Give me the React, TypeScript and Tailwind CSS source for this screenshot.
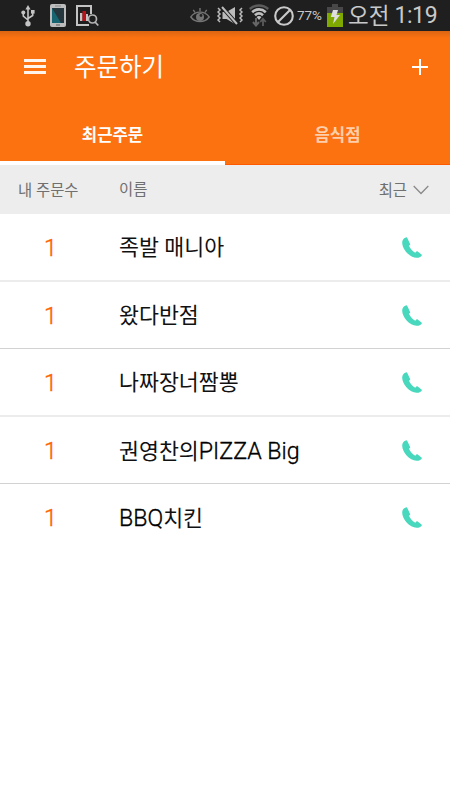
import clsx from "clsx";

interface Order {
  id: number;
  count: number;
  name: string;
  suffix?: string;
  prefix?: string;
}

const orders: Order[] = [
  { id: 1, count: 1, name: "족발 매니아" },
  { id: 2, count: 1, name: "왔다반점" },
  { id: 3, count: 1, name: "나짜장너짬뽕" },
  { id: 4, count: 1, name: "권영찬의", suffix: "PIZZA Big" },
  { id: 5, count: 1, prefix: "BBQ", name: "치킨" },
];

const UsbIcon = () => (
  <svg width="14" height="22" viewBox="0 0 14 22" fill="none" stroke="#c4c4c4" strokeWidth="1.6">
    <path d="M7 4v14M2.3 8v3.2L7 15M11.7 7v3.5L7 13.5" />
    <path d="M7 0l2.6 4.5H4.4z" fill="#c4c4c4" stroke="none" />
    <circle cx="2.3" cy="7.5" r="2" fill="#c4c4c4" stroke="none" />
    <path d="M10 5h3.6v3.6H10z" fill="#c4c4c4" stroke="none" />
    <circle cx="7" cy="18.8" r="2.7" fill="#c4c4c4" stroke="none" />
  </svg>
);

const TabletIcon = () => (
  <svg width="16" height="23" viewBox="0 0 16 23">
    <rect width="16" height="23" rx="2" fill="#bdbdbd" />
    <path d="M2 4h12v15H2z" fill="#26373d" />
    <path d="M2 4l9 15H2z" fill="#176571" />
    <path d="M5 2h6" stroke="#888" />
    <path d="M6 21h4" stroke="#777" strokeWidth="1.4" />
  </svg>
);

const ReportIcon = () => (
  <svg width="23" height="22" viewBox="0 0 23 22" fill="none">
    <path d="M15 9V1H1v19h12" stroke="#c4c4c4" strokeWidth="2" />
    <path d="M4 8h2.5v8H4z" fill="#c4c4c4" />
    <path d="M6.5 6H10v10H6.5z" fill="#bd1018" />
    <path d="M10 9h2v7h-2z" fill="#c4c4c4" />
    <circle cx="16.5" cy="14" r="4" fill="#1f1f1f" stroke="#b5b5b5" strokeWidth="1.7" />
    <path d="M19 17l3.3 3.5" stroke="#b5b5b5" strokeWidth="1.8" />
  </svg>
);

const EyeIcon = () => (
  <svg width="20" height="17" viewBox="0 0 20 17" fill="none" stroke="#747474">
    <path d="M.8 10C5 3.5 15 3.5 19.2 10 15 16 5 16 .8 10z" strokeWidth="1.4" />
    <circle cx="10" cy="10" r="4" fill="#747474" stroke="none" />
    <circle cx="11" cy="8.5" r="1.4" fill="#222" stroke="none" />
    <path d="M10 4.5V1M5 5.5L3.3 2.8M15 5.5l1.7-2.7" strokeWidth="1.4" />
  </svg>
);

const MuteIcon = () => (
  <svg width="26" height="19" viewBox="0 0 26 19" fill="none" stroke="#bcbcbc">
    <path d="M5.5 6h4L18 1v17l-8.5-5h-4z" fill="#bcbcbc" stroke="none" />
    <path d="M5 1l15 17" stroke="#1f1f1f" strokeWidth="4" />
    <path d="M5 1l15 17" strokeWidth="2" />
    <path
      d="M1 2l2 2-2 2 2 2-2 2 2 2-2 2 2 2M25 2l-2 2 2 2-2 2 2 2-2 2 2 2-2 2"
      strokeWidth="1.5"
    />
  </svg>
);

const WifiIcon = () => (
  <svg width="20" height="23" viewBox="0 0 20 23" fill="none">
    <path d="M.8 5C6 .3 14 .3 19.2 5" stroke="#5b5b5b" strokeWidth="2.4" />
    <path d="M3.2 8.2c4-3.8 9.6-3.8 13.6 0M6 11.2c2.5-2.3 5.5-2.3 8 0" stroke="#bfbfbf" strokeWidth="2.6" />
    <path d="M7.5 13q2.5-2 5 0L10 16z" fill="#bfbfbf" />
    <path d="M7 14v7M4 18l3 3.5 3-3.5" stroke="#666" strokeWidth="2" />
    <path d="M14 22v-7M11.2 18l2.8-3.2 2.8 3.2" stroke="#5b5b5b" strokeWidth="1.8" />
  </svg>
);

const BlockIcon = () => (
  <svg width="20" height="20" viewBox="0 0 20 20" fill="none" stroke="#c9c9c9" strokeWidth="2.1">
    <circle cx="10" cy="10" r="8.8" />
    <path d="M4 16L16 4" />
  </svg>
);

const BatteryIcon = () => (
  <svg width="16" height="23" viewBox="0 0 16 23">
    <path d="M5 0h6v3h5v7H0V3h5z" fill="#484848" />
    <path d="M0 9h16v14H0z" fill="#7fa800" />
    <path d="M6 6h5l-1.5 5H13L6 20l1.5-7H3.8z" fill="#dedede" />
  </svg>
);

const PhoneIcon = () => (
  <svg width="20" height="21" viewBox="0 0 20 21" fill="#48d8be">
    <path d="M3.8.4C1.3 1.1.1 3.2.2 6c.3 6.6 7.4 14.4 14.3 14.8 2.3.1 4.2-.7 5.3-2.3.3-.4.1-.8-.3-1.1l-3.8-3c-.5-.3-.9-.3-1.3.1l-1.1 1.2C10.7 14.3 8 11.5 7 8.7l.8-.6c.4-.3.5-.7.3-1.2L5.3.9C5 .4 4.4.2 3.8.4z" />
  </svg>
);

const StatusBar = () => (
  <div className="flex h-[31px] items-center bg-[#1f1f1f] text-[#c9c9c9]">
    <div className="flex items-center pl-[21px]">
      <UsbIcon />
      <div className="ml-[15px]">
        <TabletIcon />
      </div>
      <div className="ml-[10px]">
        <ReportIcon />
      </div>
    </div>
    <div className="ml-auto flex items-center pr-[12px]">
      <EyeIcon />
      <div className="ml-[7px]">
        <MuteIcon />
      </div>
      <div className="ml-[6px]">
        <WifiIcon />
      </div>
      <div className="ml-[5px]">
        <BlockIcon />
      </div>
      <span className="ml-[3px] w-[27px] text-[13.5px] leading-none tracking-[-0.1px]">77%</span>
      <div className="ml-[3px]">
        <BatteryIcon />
      </div>
      <span className="ml-[5px] flex w-[90px] items-center whitespace-nowrap leading-[30px]">
        <span className="text-[22.5px]">오전</span>
        <span className="ml-[5px] text-[23px] tracking-[-0.4px]">1:19</span>
      </span>
    </div>
  </div>
);

const Header = () => (
  <header className="bg-[#fc7211] text-white">
    <div className="flex h-[71px] items-center bg-linear-to-b from-[#dc6511] via-[#fc7211] via-[7px] to-[#fc7211] pl-6 pr-[21px]">
      <button className="flex w-[22px] flex-col gap-[3px]" aria-label="메뉴">
        <span className="h-[3px] w-full bg-[#fff4ec]" />
        <span className="h-[3px] w-full bg-[#fff4ec]" />
        <span className="h-[3px] w-full bg-[#fff4ec]" />
      </button>
      <h1 className="ml-[28px] pt-[2px] text-[24.5px] leading-[36px]">주문하기</h1>
      <svg className="ml-auto" width="18" height="18" viewBox="0 0 18 18" stroke="#fff" strokeWidth="2">
        <path d="M9 1v16M1 9h16" />
      </svg>
    </div>
    <div className="flex h-[63px] text-[16.7px] font-bold">
      <div className="flex flex-1 items-center justify-center border-b-4 border-white pt-[9px]">최근주문</div>
      <div className="flex flex-1 items-center justify-center border-b border-[#ff5a00] pt-[6px] text-[#ffcfac]">
        음식점
      </div>
    </div>
  </header>
);

const Latin = ({ text }: { text: string }) => (
  <span className="text-[23.2px] font-light text-black [-webkit-text-stroke:0.35px_#000]">{text}</span>
);

const OrderRow = ({ order, index }: { order: Order; index: number }) => (
  <div
    className={clsx(
      "flex items-center pr-[28px] pt-[2px]",
      index % 2 === 0 ? "h-[68px] border-b-2" : "h-[67px] border-b border-[#d2d2d2]",
      index === orders.length - 1 ? "border-transparent" : index % 2 === 0 && "border-[#ececec]"
    )}
  >
    <span className="w-[119px] pl-[44px] pt-px font-[Roboto] text-[23.5px] font-light leading-none text-[#ff6000] [-webkit-text-stroke:0.4px_#ff6000]">
      {order.count}
    </span>
    <span className="text-[21.7px] leading-[32px] text-[#111]">
      {order.prefix && <Latin text={order.prefix} />}
      {order.name}
      {order.suffix && <Latin text={order.suffix} />}
    </span>
    <div className="-mt-px ml-auto">
      <PhoneIcon />
    </div>
  </div>
);

const App = () => {
  return (
    <div className="h-[800px] w-[450px] overflow-hidden bg-white font-[Roboto,'Noto_Sans_CJK_KR',sans-serif]">
      <StatusBar />
      <Header />
      <div className="flex h-[49px] items-center bg-[#ededed] pl-[18px] pr-[21px] text-[15.4px] text-[#707070]">
        <span className="w-[101px] pt-[5px]">내 주문수</span>
        <span className="pt-[3px]">이름</span>
        <span className="ml-auto pt-[5px]">최근</span>
        <svg className="ml-[6px]" width="16" height="10" viewBox="0 0 16 10" fill="none" stroke="#8a8a8a" strokeWidth="1.3">
          <path d="M.7 1l7.3 7.5L15.3 1" />
        </svg>
      </div>
      {orders.map((order, index) => (
        <OrderRow key={order.id} order={order} index={index} />
      ))}
    </div>
  );
};

export default App;
